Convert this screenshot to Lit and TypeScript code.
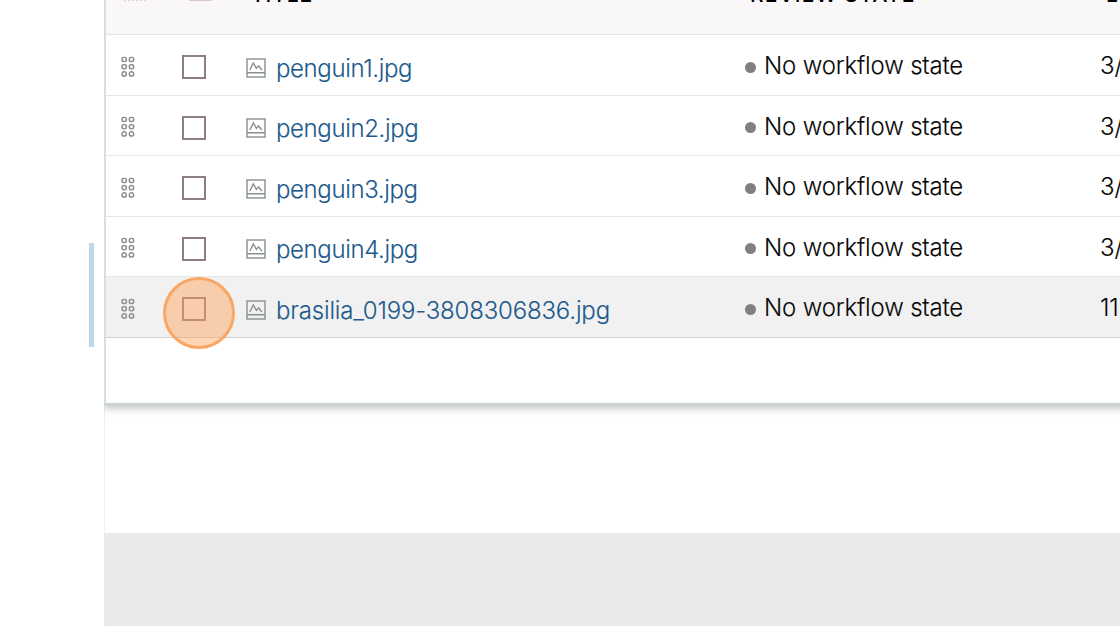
import { LitElement, html, css } from "lit";
import { customElement } from "lit/decorators.js";

interface Row {
  title: string;
  date: string;
  active?: boolean;
}

const ROWS: Row[] = [
  { title: "penguin1.jpg", date: "3/" },
  { title: "penguin2.jpg", date: "3/" },
  { title: "penguin3.jpg", date: "3/" },
  { title: "penguin4.jpg", date: "3/" },
  { title: "brasilia_0199-3808306836.jpg", date: "11", active: true },
];

@customElement("app-root")
export class AppRoot extends LitElement {
  static styles = css`
    :host {
      display: block;
      position: relative;
      width: 1120px;
      height: 626px;
      overflow: hidden;
      background: #fff;
      color: #080808;
      font: 300 24px/30px Inter, sans-serif;
      letter-spacing: -0.16px;
      -webkit-text-stroke: 0.12px currentColor;
    }
    .page {
      display: flex;
      height: 626px;
    }
    .gutter {
      width: 104px;
      flex: none;
      display: flex;
      justify-content: flex-end;
      box-sizing: border-box;
      padding: 243px 10px 0 0;
    }
    .marker {
      width: 5px;
      height: 104px;
      background: #bdd9e7;
    }
    .main {
      flex: 1;
      min-width: 0;
      display: flex;
      flex-direction: column;
    }
    .panel {
      height: 405px;
      flex: none;
      box-sizing: border-box;
      border-left: 2px solid #d3dfe2;
      border-bottom: 2px solid #c9d1d2;
      box-shadow: 0 3px 8px rgba(60, 80, 80, 0.36);
      clip-path: inset(0 0 -20px 0);
      background: #fff;
      margin-right: -20px;
    }
    .blank {
      flex: 1;
      border-left: 1px solid #edf1f1;
    }
    .footer {
      height: 93px;
      background: #eaeaea;
      border-left: 1px solid #e4e8e8;
    }
    .head,
    .row {
      display: grid;
      grid-template-columns: 76px 64px 499px 355px 1fr;
      box-sizing: border-box;
      white-space: nowrap;
    }
    .head {
      height: 35px;
      overflow: hidden;
      background: #f9f7f8;
      border-bottom: 1px solid #e0e4e4;
      font-weight: 500;
      font-size: 21px;
      line-height: 24px;
      letter-spacing: 1.2px;
      color: #000;
      -webkit-text-stroke: 0;
    }
    .head span {
      margin: -17px 0 0 5px;
    }
    .head .col-title {
      letter-spacing: 0.9px;
    }
    .head .col-date {
      margin-left: 6px;
    }
    .grip-end {
      width: 24px;
      height: 1px;
      margin-left: 18px;
      background: repeating-linear-gradient(90deg, #e9cfcf 0 2px, #f9f7f9 2px 4px);
    }
    .box-end {
      width: 23px;
      height: 1px;
      margin-left: 7px;
      background: #dcc8c8;
    }
    .row {
      height: 60.5px;
      border-bottom: 1px solid #e6e8e8;
    }
    .row.active {
      background: #f1f1f1;
      border-bottom-color: #cdd1d1;
    }
    .grip {
      display: block;
      margin: 20.6px 0 0 14.6px;
    }
    .check {
      width: 24px;
      height: 24px;
      margin-top: 20px;
      box-sizing: border-box;
      border: 2px solid #907f80;
    }
    .title {
      display: flex;
      align-items: flex-start;
      color: #205a8c;
      letter-spacing: -0.38px;
    }
    .active .title {
      letter-spacing: -0.17px;
    }
    .pic {
      flex: none;
      margin-top: 22.6px;
    }
    .name {
      margin: 18.5px 0 0 10px;
    }
    .active .name {
      margin-top: 19px;
    }
    .state {
      display: flex;
      align-items: flex-start;
    }
    .dot {
      width: 11px;
      height: 11px;
      border-radius: 50%;
      background: #808080;
      margin: 26.6px 7.6px 0 0.4px;
    }
    .label,
    .date {
      margin-top: 16px;
    }
    .halo {
      position: absolute;
      left: 163px;
      top: 277px;
      width: 72px;
      height: 72px;
      box-sizing: border-box;
      border-radius: 50%;
      border: 3px solid #f9a765;
      background: rgba(255, 163, 92, 0.46);
    }
  `;

  private grip() {
    return html`<svg class="grip" width="14" height="22" viewBox="0 0 14 22" fill="none" stroke="#8b9091" stroke-width="1.5">
      ${[3.5, 10.7, 17.9].map(
        (y) => html`<svg x="0" y=${y - 3} width="14" height="6"><circle cx="3.2" cy="3" r="2.2" /><circle cx="10.5" cy="3" r="2.2" /></svg>`
      )}
    </svg>`;
  }

  private picture() {
    return html`<svg class="pic" width="20" height="20" viewBox="0 0 20 20" fill="none" stroke="#889092" stroke-width="1.4">
      <rect x="1" y="1" width="18" height="18" />
      <path d="M1 14.7H19M3.8 12L7.3 5L10.4 10.4L12.6 7.8L15.8 12" />
    </svg>`;
  }

  render() {
    return html`
      <div class="page">
        <div class="gutter"><div class="marker"></div></div>
        <div class="main">
          <div class="panel">
            <div class="head">
              <div class="grip-end"></div>
              <div class="box-end"></div>
              <span class="col-title">TITLE</span>
              <span>REVIEW STATE</span>
              <span class="col-date">L</span>
            </div>
            ${ROWS.map(
              (r) => html`<div class="row ${r.active ? "active" : ""}">
                ${this.grip()}
                <div class="check"></div>
                <div class="title">${this.picture()}<span class="name">${r.title}</span></div>
                <div class="state"><i class="dot"></i><span class="label">No workflow state</span></div>
                <span class="date">${r.date}</span>
              </div>`
            )}
          </div>
          <div class="blank"></div>
          <div class="footer"></div>
        </div>
      </div>
      <div class="halo"></div>
    `;
  }
}
